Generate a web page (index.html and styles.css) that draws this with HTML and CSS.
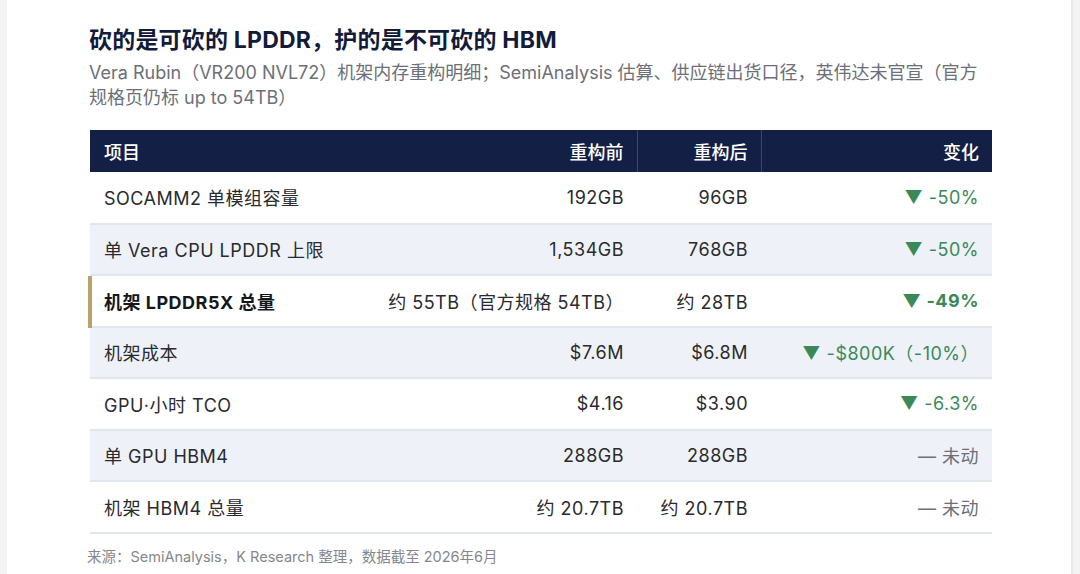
FILE: index.html
```html
<!DOCTYPE html>
<html lang="zh-CN">
<head>
<meta charset="utf-8">
<title>砍的是可砍的 LPDDR，护的是不可砍的 HBM</title>
<link rel="stylesheet" href="styles.css">
</head>
<body>
<div class="panel">
  <h1 class="title">砍的是可砍的 LPDDR，护的是不可砍的 HBM</h1>
  <p class="subtitle">Vera Rubin（VR200 NVL72）机架内存重构明细；SemiAnalysis 估算、供应链出货口径，英伟达未官宣（官方规格页仍标 up to 54TB）</p>
  <table class="data">
    <colgroup>
      <col class="w-item">
      <col class="w-before">
      <col class="w-after">
      <col class="w-change">
    </colgroup>
    <thead>
      <tr>
        <th class="c-item">项目</th>
        <th class="num">重构前</th>
        <th class="num sep">重构后</th>
        <th class="num sep">变化</th>
      </tr>
    </thead>
    <tbody>
      <tr>
        <td class="c-item">SOCAMM2 单模组容量</td>
        <td class="num">192GB</td>
        <td class="num">96GB</td>
        <td class="num down">▼ -50%</td>
      </tr>
      <tr class="alt">
        <td class="c-item">单 Vera CPU LPDDR 上限</td>
        <td class="num">1,534GB</td>
        <td class="num">768GB</td>
        <td class="num down">▼ -50%</td>
      </tr>
      <tr class="key">
        <td class="c-item">机架 LPDDR5X 总量</td>
        <td class="num">约 55TB（官方规格 54TB）</td>
        <td class="num">约 28TB</td>
        <td class="num down">▼ -49%</td>
      </tr>
      <tr class="alt">
        <td class="c-item">机架成本</td>
        <td class="num">$7.6M</td>
        <td class="num">$6.8M</td>
        <td class="num down">▼ -$800K（-10%）</td>
      </tr>
      <tr>
        <td class="c-item">GPU·小时 TCO</td>
        <td class="num">$4.16</td>
        <td class="num">$3.90</td>
        <td class="num down">▼ -6.3%</td>
      </tr>
      <tr class="alt">
        <td class="c-item">单 GPU HBM4</td>
        <td class="num">288GB</td>
        <td class="num">288GB</td>
        <td class="num flat">— 未动</td>
      </tr>
      <tr>
        <td class="c-item">机架 HBM4 总量</td>
        <td class="num">约 20.7TB</td>
        <td class="num">约 20.7TB</td>
        <td class="num flat">— 未动</td>
      </tr>
    </tbody>
  </table>
  <p class="source">来源：SemiAnalysis，K Research 整理，数据截至 2026年6月</p>
</div>
</body>
</html>
```

FILE: styles.css
```css
* { box-sizing: border-box; }

html, body {
  margin: 0;
  padding: 0;
  background: #f3f3f3;
}

body {
  font-family: "Inter", "Noto Sans CJK SC", sans-serif;
  color: #2a2a2e;
}

.panel {
  margin: 0 7px;
  min-height: 574px;
  background: #ffffff;
  padding: 25px 81px 0 82px;
  border-right: 2px solid #e9e9e9;
}

.title {
  margin: 0;
  font-size: 23px;
  line-height: 30px;
  font-weight: 700;
  letter-spacing: 0.2px;
  color: #121b3a;
}

.subtitle {
  margin: 5px 0 0 0;
  font-size: 18px;
  line-height: 25px;
  color: #6c6f78;
}

.data {
  width: 902px;
  margin: 20px 0 0 1px;
  border-collapse: collapse;
  table-layout: fixed;
  font-size: 18px;
}

.w-item { width: 283px; }
.w-before { width: 264px; }
.w-after { width: 124px; }
.w-change { width: 231px; }

.data th {
  height: 42px;
  padding: 0 13px 0 14px;
  background: #131f45;
  color: #ffffff;
  font-weight: 500;
  text-align: left;
}

.data th.sep {
  border-left: 1px solid #3b4670;
}

.data td {
  height: 51.5px;
  padding: 0 13px 0 14px;
  border-bottom: 2px solid #e1e5ec;
  white-space: nowrap;
  letter-spacing: 0.5px;
  color: #2a2a2e;
}

.data th.num,
.data td.num { text-align: right; }

.data tr.alt td { background: #eef2f8; }

.data tr.key td.c-item {
  position: relative;
  font-weight: 700;
  color: #16171c;
}

.data tr.key td.c-item::before {
  content: "";
  position: absolute;
  left: -2px;
  top: 0;
  bottom: -2px;
  width: 4px;
  background: #b9a26c;
}

.data td.down { color: #3a8a58; }

.data tr.key td.down { font-weight: 700; }

.data td.flat { color: #6c6f78; }

.source {
  margin: 13px 0 0 -2px;
  font-size: 14.5px;
  line-height: 20px;
  color: #85878d;
}
```
